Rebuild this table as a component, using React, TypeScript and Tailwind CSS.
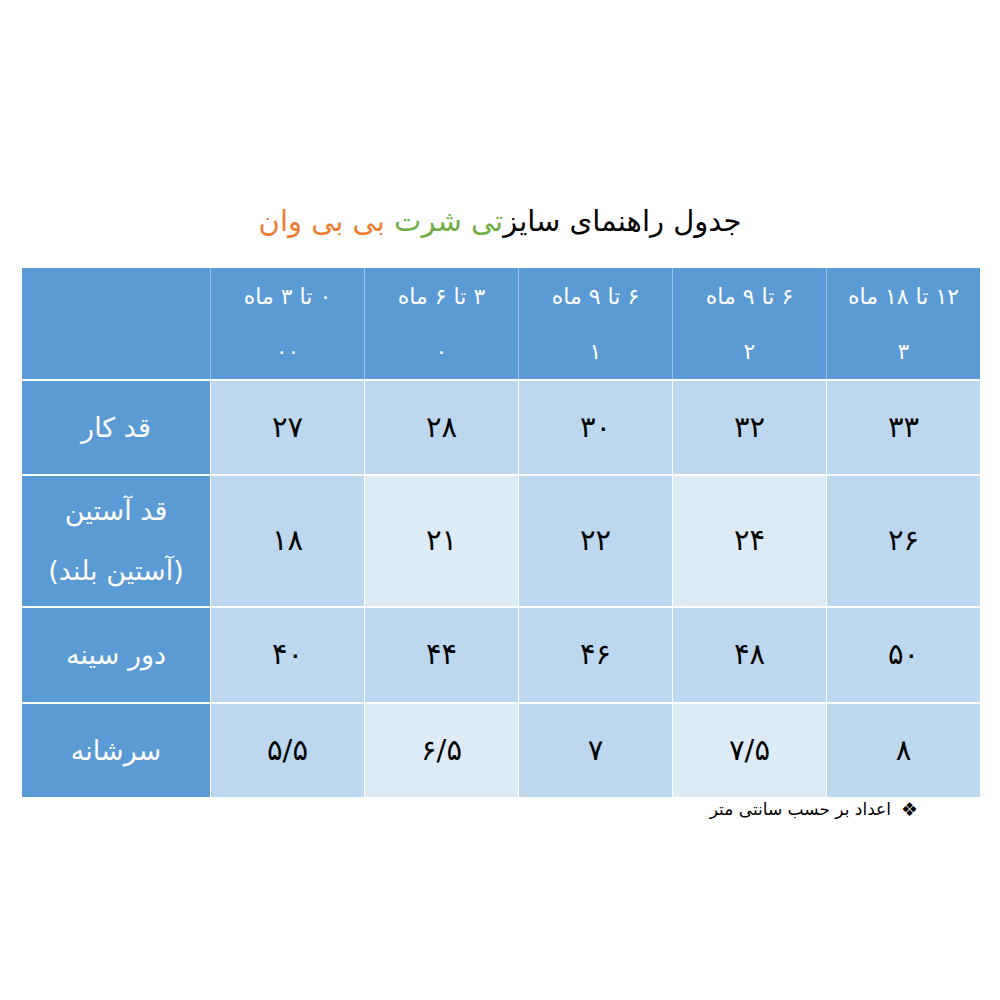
import React from 'react';

const FONT = { fontFamily: '"DejaVu Sans", "Noto Sans", sans-serif' };

// header columns: range label + size code
const sizes = [
  ['۰ تا ۳ ماه', '۰۰'],
  ['۳ تا ۶ ماه', '۰'],
  ['۶ تا ۹ ماه', '۱'],
  ['۶ تا ۹ ماه', '۲'],
  ['۱۲ تا ۱۸ ماه', '۳'],
];

type Row = { label: string[]; values: string[]; height: string; banded: boolean };

const rows: Row[] = [
  { label: ['قد کار'], values: ['۲۷', '۲۸', '۳۰', '۳۲', '۳۳'], height: 'h-[95px]', banded: true },
  { label: ['قد آستین', '(آستین بلند)'], values: ['۱۸', '۲۱', '۲۲', '۲۴', '۲۶'], height: 'h-[132px]', banded: false },
  { label: ['دور سینه'], values: ['۴۰', '۴۴', '۴۶', '۴۸', '۵۰'], height: 'h-[96px]', banded: true },
  { label: ['سرشانه'], values: ['۵/۵', '۶/۵', '۷', '۷/۵', '۸'], height: 'h-[95px]', banded: false },
];

export default function App() {
  return (
    <div className="min-h-screen bg-white pt-[197px]" style={FONT}>
      {/* Title */}
      <h1 dir="rtl" className="text-center text-[29px] leading-[48px] text-black">
        <span>جدول راهنمای سایز</span>
        <span className="text-[#70ad47]">تی شرت </span>
        <span className="text-[#ed7d31]">بی بی وان</span>
      </h1>

      {/* Size table */}
      <div className="ml-[22px] mt-[23px] w-[958px]">
        <div className="flex h-[111px] bg-[#5b9bd5]">
          <div className="w-[188px]" />
          {sizes.map(([range, code], i) => (
            <div
              key={i}
              dir="rtl"
              className="flex w-[154px] flex-col items-center border-l border-[#9dc3e6] pt-[12px] text-[22px] text-white"
            >
              <div className="leading-[34px]">{range}</div>
              <div className="mt-[21px] leading-[34px]">{code}</div>
            </div>
          ))}
        </div>

        {rows.map((row, r) => (
          <div key={r} className={`flex ${row.height} border-t-2 border-white`}>
            <div
              dir="rtl"
              className="flex w-[188px] flex-col items-center justify-center gap-[16px] bg-[#5b9bd5] text-[27px] leading-[44px] text-white"
            >
              {row.label.map((l) => (
                <div key={l}>{l}</div>
              ))}
            </div>
            {row.values.map((v, i) => {
              const light = !row.banded && i % 2 === 1;
              return (
                <div
                  key={i}
                  className={`flex w-[154px] items-center justify-center border-l border-white text-[29px] text-black ${
                    light ? 'bg-[#ddebf7]' : 'bg-[#bdd7ee]'
                  }`}
                >
                  {v}
                </div>
              );
            })}
          </div>
        ))}

        {/* Footnote */}
        <div className="flex justify-end pr-[62px]">
          <div dir="rtl" className="flex items-center gap-[10px] text-[17px] leading-[24px] text-black">
            <span className="text-[19px]">❖</span>
            <span>اعداد بر حسب سانتی متر</span>
          </div>
        </div>
      </div>
    </div>
  );
}
